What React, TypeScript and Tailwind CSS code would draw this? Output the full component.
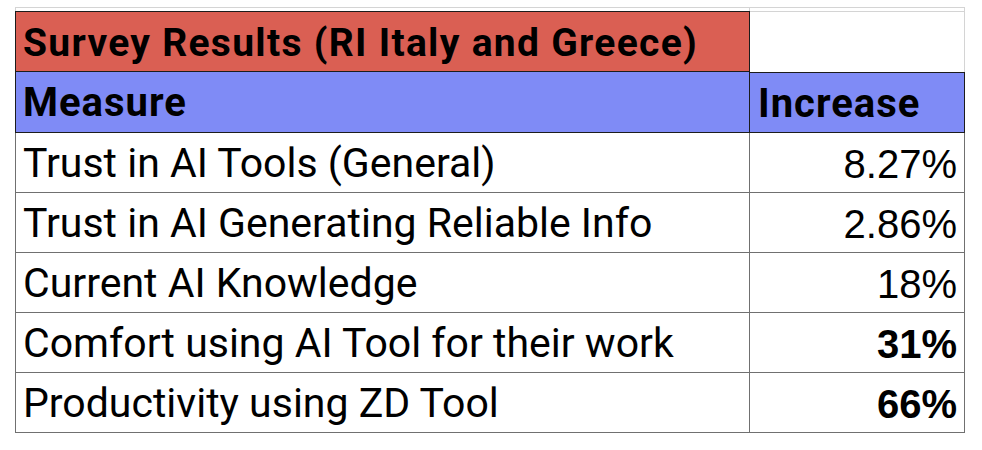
const ROWS = [
  { label: 'Trust in AI Tools (General)', value: '8.27%', bold: false },
  { label: 'Trust in AI Generating Reliable Info', value: '2.86%', bold: false },
  { label: 'Current AI Knowledge', value: '18%', bold: false },
  { label: 'Comfort using AI Tool for their work', value: '31%', bold: true },
  { label: 'Productivity using ZD Tool', value: '66%', bold: true },
];

const labelFont = "font-['Roboto',sans-serif]";
const numFont = "font-['Liberation_Sans',Arial,sans-serif]";

export default function App() {
  return (
    <div className="w-[982px] h-[450px] bg-white pl-[15px] pt-[7px]">
      {/* spreadsheet gridline stub above the table */}
      <div className="flex h-[4px]">
        <div className="w-[734px] border-l border-t border-[#d4d4d4]" />
        <div className="w-[216px] border-l border-t border-r border-[#d4d4d4]" />
      </div>

      <div className="flex h-[61px]">
        <div
          className={`w-[735px] flex items-center pl-[7px] pt-[3px] bg-[#da5f53] border border-[#1c1c1c] ${labelFont} font-bold text-[39px] tracking-[1.3px] text-black`}
        >
          Survey Results (RI Italy and Greece)
        </div>
        <div className="w-[215px] border-t border-r border-[#d4d4d4]" />
      </div>

      <div className="flex h-[61px]">
        <div
          className={`w-[735px] flex items-center pl-[7px] pt-[2px] bg-[#7f8bf6] border-l border-r border-b border-[#1c1c1c] ${labelFont} font-bold text-[40px] tracking-[1px] text-black`}
        >
          Measure
        </div>
        <div
          className={`w-[215px] flex items-center pl-[8px] pt-[2px] bg-[#7f8bf6] border-t border-r border-b border-[#1c1c1c] ${labelFont} font-bold text-[40px] tracking-[1px] text-black`}
        >
          Increase
        </div>
      </div>

      {ROWS.map(({ label, value, bold }) => (
        <div key={label} className="flex h-[60px]">
          <div
            className={`w-[735px] flex items-center pl-[7px] pt-[2px] border-l border-r border-b border-[#707070] ${labelFont} text-[41px] text-black`}
          >
            {label}
          </div>
          <div
            className={`w-[215px] flex items-center justify-end pr-[7px] pt-[2px] border-r border-b border-[#707070] ${numFont} ${bold ? 'font-bold' : ''} text-[40px] text-black`}
          >
            {value}
          </div>
        </div>
      ))}
    </div>
  );
}
